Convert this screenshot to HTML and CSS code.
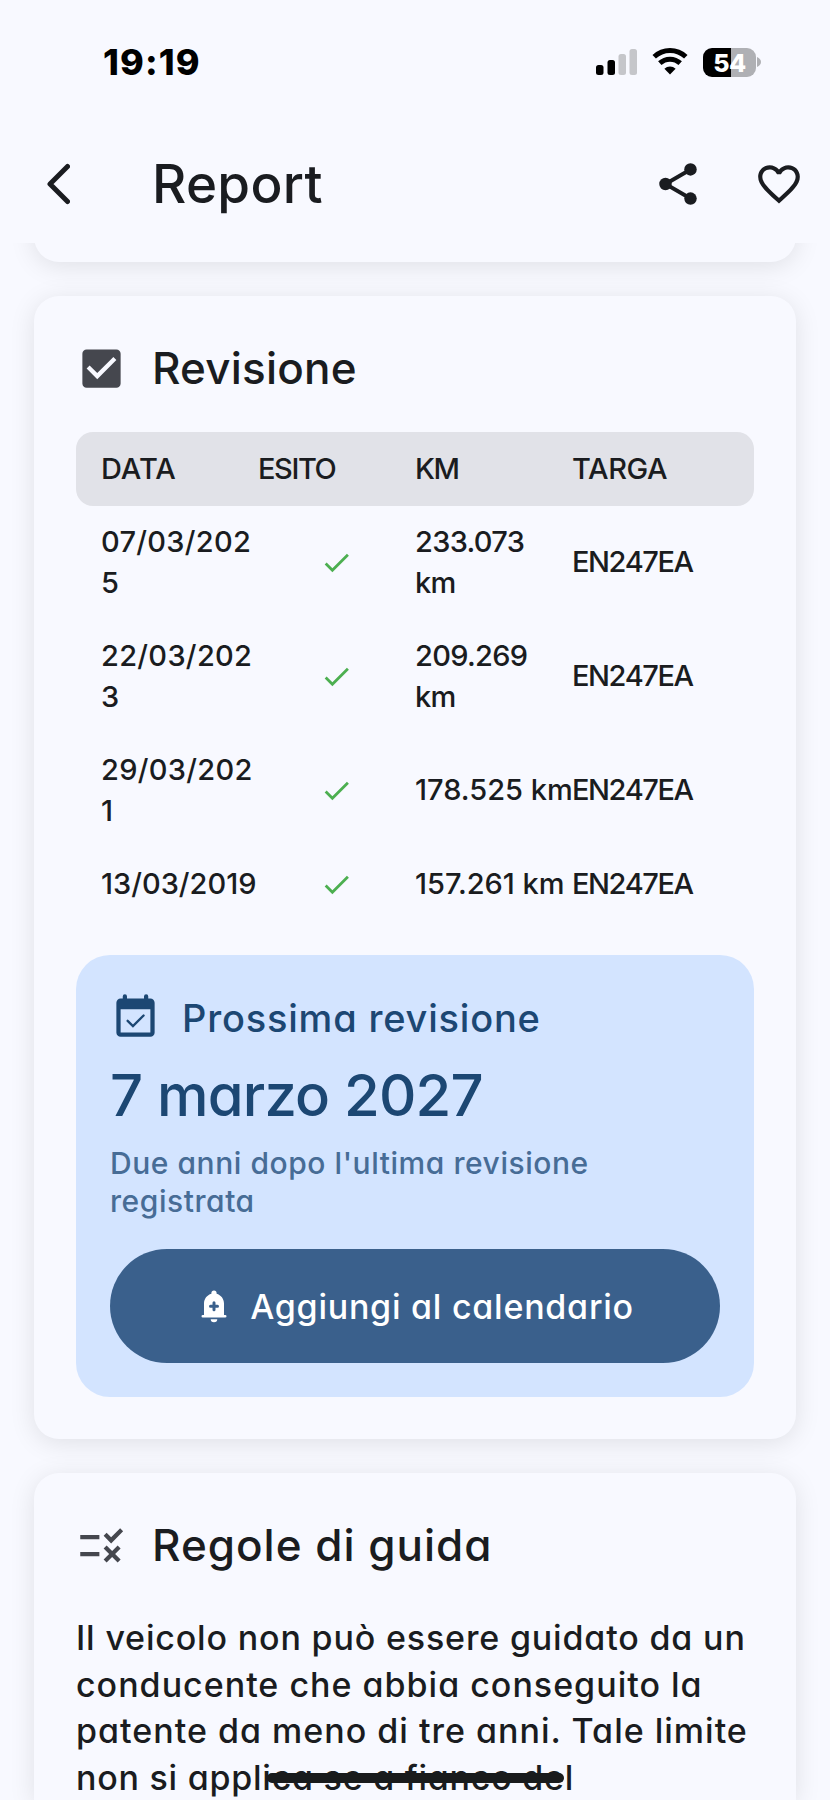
FILE: index.html
```html
<!DOCTYPE html>
<html lang="it">
<head>
  <meta charset="utf-8">
  <title>Report</title>
  <link rel="stylesheet" href="styles.css">
</head>
<body>
  <header class="top">
    <div class="status-bar">
      <span class="time">19:19</span>
      <div class="status-icons">
        <svg class="signal" width="42" height="28" viewBox="0 0 42 28">
          <rect x="0" y="17" width="7.500" height="10" rx="2.500"/>
          <rect x="11.500" y="12" width="7.500" height="15" rx="2.500"/>
          <rect class="off" x="22.500" y="6" width="7.500" height="21" rx="2.500"/>
          <rect class="off" x="33.500" y="1" width="7.500" height="26" rx="2.500"/>
        </svg>
        <svg class="wifi" width="36" height="28" viewBox="0 0 36 28">
          <path d="M2.200 8.800a23 23 0 0 1 31.600 0M7.800 15.200a15 15 0 0 1 20.400 0" fill="none" stroke="#000" stroke-width="5"/>
          <path d="M12.400 20.700a8.200 8.200 0 0 1 11.200 0L18 26.500z"/>
        </svg>
        <div class="battery"><span>54</span></div>
        <svg class="battery-cap" width="4" height="10" viewBox="0 0 4 10"><path d="M0 0q4 2 4 5t-4 5z"/></svg>
      </div>
    </div>
    <nav class="app-bar">
      <svg class="back" width="24" height="42" viewBox="0 0 24 42"><path d="M21.500 3.500L4 21L21.500 38.500"/></svg>
      <h1>Report</h1>
      <svg class="share" width="50" height="50" viewBox="0 0 24 24">
        <path d="M18 5L6 12l12 7" fill="none" stroke="#1a1c20" stroke-width="1.900"/>
        <circle cx="18" cy="5" r="3"/><circle cx="6" cy="12" r="3"/><circle cx="18" cy="19" r="3"/>
      </svg>
      <svg class="heart" width="50" height="50" viewBox="0 0 24 24">
        <path d="M16.500 3c-1.740 0-3.410.81-4.500 2.090C10.910 3.810 9.240 3 7.500 3 4.420 3 2 5.420 2 8.500c0 3.780 3.400 6.860 8.550 11.540L12 21.350l1.450-1.320C18.600 15.360 22 12.280 22 8.500 22 5.420 19.580 3 16.500 3zm-4.400 15.550l-.1.100-.1-.1C7.140 14.240 4 11.390 4 8.500 4 6.500 5.500 5 7.500 5c1.540 0 3.040.99 3.570 2.360h1.870C13.460 5.990 14.960 5 16.500 5c2 0 3.500 1.500 3.500 3.500 0 2.890-3.140 5.740-7.900 10.050z"/>
      </svg>
    </nav>
  </header>

  <main class="content">
    <section class="card previous"></section>

    <section class="card">
      <div class="card-title">
        <svg width="51" height="51" viewBox="0 0 24 24"><path d="M19 3H5c-1.110 0-2 .9-2 2v14c0 1.100.89 2 2 2h14c1.110 0 2-.9 2-2V5c0-1.100-.89-2-2-2zm-9 14l-5-5 1.410-1.410L10 14.170l7.590-7.590L19 8l-9 9z"/></svg>
        <h2>Revisione</h2>
      </div>

      <div class="row head">
        <span>DATA</span><span class="esito">ESITO</span><span class="esito">KM</span><span class="targa">TARGA</span>
      </div>
      <div class="row">
        <span class="day">07/03/202<br>5</span>
        <svg class="ok" viewBox="0 0 24 24"><path d="M9 16.170L4.830 12l-1.420 1.410L9 19 21 7l-1.410-1.410z"/></svg>
        <span class="km">233.073<br>km</span><span class="plate">EN247EA</span>
      </div>
      <div class="row">
        <span class="day">22/03/202<br>3</span>
        <svg class="ok" viewBox="0 0 24 24"><path d="M9 16.170L4.830 12l-1.420 1.410L9 19 21 7l-1.410-1.410z"/></svg>
        <span class="km">209.269<br>km</span><span class="plate">EN247EA</span>
      </div>
      <div class="row">
        <span class="day">29/03/202<br>1</span>
        <svg class="ok" viewBox="0 0 24 24"><path d="M9 16.170L4.830 12l-1.420 1.410L9 19 21 7l-1.410-1.410z"/></svg>
        <span>178.525 km</span><span class="plate">EN247EA</span>
      </div>
      <div class="row">
        <span>13/03/2019</span>
        <svg class="ok" viewBox="0 0 24 24"><path d="M9 16.170L4.830 12l-1.420 1.410L9 19 21 7l-1.410-1.410z"/></svg>
        <span>157.261 km</span><span class="plate">EN247EA</span>
      </div>

      <div class="next">
        <div class="next-title">
          <svg width="51" height="51" viewBox="0 0 24 24">
            <path d="M19 4h-1V3a1 1 0 0 0-2 0v1H8V3a1 1 0 0 0-2 0v1H5a2 2 0 0 0-2 2v14a2 2 0 0 0 2 2h14a2 2 0 0 0 2-2V6a2 2 0 0 0-2-2zm0 16H5V9h14z"/>
            <path d="M8.300 14.500l2.500 2.500 5-5" fill="none" stroke="#1c4773" stroke-width="1.100" stroke-linecap="round"/>
          </svg>
          <h3>Prossima revisione</h3>
        </div>
        <div class="date">7 marzo 2027</div>
        <p class="note">Due anni dopo l'ultima revisione<br>registrata</p>
        <button class="add">
          <svg width="26" height="33" viewBox="0 0 26 33">
            <path d="M13 .5a2.600 2.600 0 0 0-2.600 2.600v.7C6 5 3 8.900 3 13.500V25H1.800a1.300 1.300 0 0 0 0 2.600h22.400a1.300 1.300 0 0 0 0-2.600H23V13.500C23 8.900 20 5 15.600 3.800v-.7A2.600 2.600 0 0 0 13 .5zM9.700 29.300a3.300 3 0 0 0 6.600 0z"/>
            <path d="M13 12.800v7M9.500 16.300h7" fill="none" stroke="#3a608c" stroke-width="3" stroke-linecap="round"/>
          </svg>
          <span>Aggiungi al calendario</span>
        </button>
      </div>
    </section>

    <section class="card rules">
      <div class="card-title">
        <svg width="51" height="51" viewBox="0 0 24 24"><path d="M16.540 11L13 7.460l1.410-1.410 2.120 2.120 4.240-4.240 1.410 1.410L16.540 11zM11 7H2v2h9V7zm10 6.410L19.590 12 17 14.590 14.410 12 13 13.410 15.590 16 13 18.590 14.410 20 17 17.410 19.590 20 21 18.590 18.410 16 21 13.410zM11 15H2v2h9v-2z"/></svg>
        <h2 class="wide">Regole di guida</h2>
      </div>
      <p class="text">Il veicolo non può essere guidato da un<br><span class="wide">conducente che abbia conseguito la</span><br><span class="wide">patente da meno di tre anni. Tale limite</span><br><span class="last">non si applica se a fianco del<i class="stroke"></i></span></p>
    </section>
  </main>
</body>
</html>
```

FILE: styles.css
```css
* {
  box-sizing: border-box;
}
body {
  margin: 0;
  width: 830px;
  height: 1800px;
  overflow: hidden;
  background: #f8f9ff;
  color: #1a1c20;
  font-family: Inter, "Noto Sans", sans-serif;
  font-weight: 500;
  font-feature-settings: "cv11";
}
h1, h2, h3, p {
  margin: 0;
  font-weight: 500;
}
svg {
  flex: none;
  display: block;
}
.top {
  height: 243px;
  position: relative;
  z-index: 1;
  background: #f8f9ff;
}
.status-bar {
  height: 124px;
  padding: 0 69px 0 103px;
  display: flex;
  align-items: center;
  justify-content: space-between;
}
.time {
  color: #000;
  font-size: 36px;
  font-weight: 800;
  letter-spacing: 1.1px;
}
.status-icons {
  display: flex;
  align-items: center;
}
.off {
  fill: #c5c6ca;
}
.wifi {
  margin: 0 15px 0 14px;
}
.battery {
  width: 53px;
  height: 29px;
  border-radius: 9px;
  background: linear-gradient(90deg, #000 53%, #afb0b4 53%);
  color: #fff;
  font-size: 25px;
  font-weight: 800;
  line-height: 30px;
  letter-spacing: -0.5px;
  text-align: center;
}
.battery-cap {
  margin-left: 1px;
  fill: #afb0b4;
}
.app-bar {
  height: 120px;
  padding: 0 26px 0 46px;
  display: flex;
  align-items: center;
  fill: #1a1c20;
}
.back {
  fill: none;
  stroke: #1a1c20;
  stroke-width: 5;
  stroke-linecap: round;
  stroke-linejoin: round;
}
h1 {
  flex: 1;
  margin-left: 82px;
  font-size: 53px;
  line-height: 60px;
  letter-spacing: 0.3px;
}
.heart {
  margin-left: 51px;
}
.content {
  padding: 0 34px;
}
.card {
  margin-bottom: 34px;
  padding: 42px;
  border-radius: 25px;
  background: #f8f9ff;
  box-shadow: 0 4px 26px rgba(0, 0, 0, 0.1);
}
.previous {
  height: 84px;
  margin-top: -65px;
}
.card-title {
  height: 60px;
  margin-bottom: 34px;
  display: flex;
  align-items: center;
  gap: 25px;
  fill: #45474e;
}
h2 {
  font-size: 44px;
  line-height: 58px;
  letter-spacing: 0.2px;
}
.wide {
  letter-spacing: 1px;
}
.row {
  display: grid;
  grid-template-columns: repeat(4, 157px);
  align-items: center;
  padding: 16.500px 25px;
  font-size: 29px;
  line-height: 40.500px;
  white-space: nowrap;
}
.head {
  border-radius: 17px;
  background: #e1e2e8;
}
.esito {
  letter-spacing: -1.4px;
}
.targa {
  letter-spacing: -0.4px;
}
.day {
  letter-spacing: 0.3px;
}
.km {
  letter-spacing: -0.7px;
}
.plate {
  letter-spacing: -1.4px;
}
.ok {
  width: 33px;
  height: 33px;
  margin-left: 62px;
  fill: #4caf50;
}
.next {
  margin-top: 34px;
  height: 442px;
  padding: 34px;
  border-radius: 34px;
  background: #d3e4ff;
  color: #1c4773;
}
.next-title {
  height: 58px;
  display: flex;
  align-items: center;
  gap: 21px;
  fill: #1c4773;
}
.next-title svg {
  margin-top: -6px;
}
h3 {
  font-size: 38px;
  letter-spacing: 0.8px;
}
.date {
  margin-top: 8px;
  font-size: 58px;
  line-height: 80px;
  letter-spacing: -0.8px;
}
.note {
  margin: 9px 0 29px;
  font-size: 30px;
  line-height: 38px;
  letter-spacing: 0.55px;
  color: #476c96;
}
.add {
  width: 610px;
  height: 114px;
  padding: 0 0 0 5px;
  border: none;
  border-radius: 57px;
  background: #3a608c;
  color: #fff;
  fill: #fff;
  font: inherit;
  font-size: 34px;
  letter-spacing: 0.75px;
  display: flex;
  align-items: center;
  justify-content: center;
  gap: 23px;
}
.rules {
  height: 328px;
  padding-bottom: 0;
  border-radius: 25px 25px 0 0;
  margin-bottom: 0;
}
.rules .card-title {
  margin-bottom: 40px;
}
.text {
  font-size: 34px;
  line-height: 46.500px;
  letter-spacing: 0.83px;
  white-space: nowrap;
}
.last {
  position: relative;
  letter-spacing: 0.75px;
}
.stroke {
  position: absolute;
  left: 191px;
  top: 16px;
  width: 297px;
  height: 10px;
  border-radius: 5px;
  background: #191b1c;
}
```
